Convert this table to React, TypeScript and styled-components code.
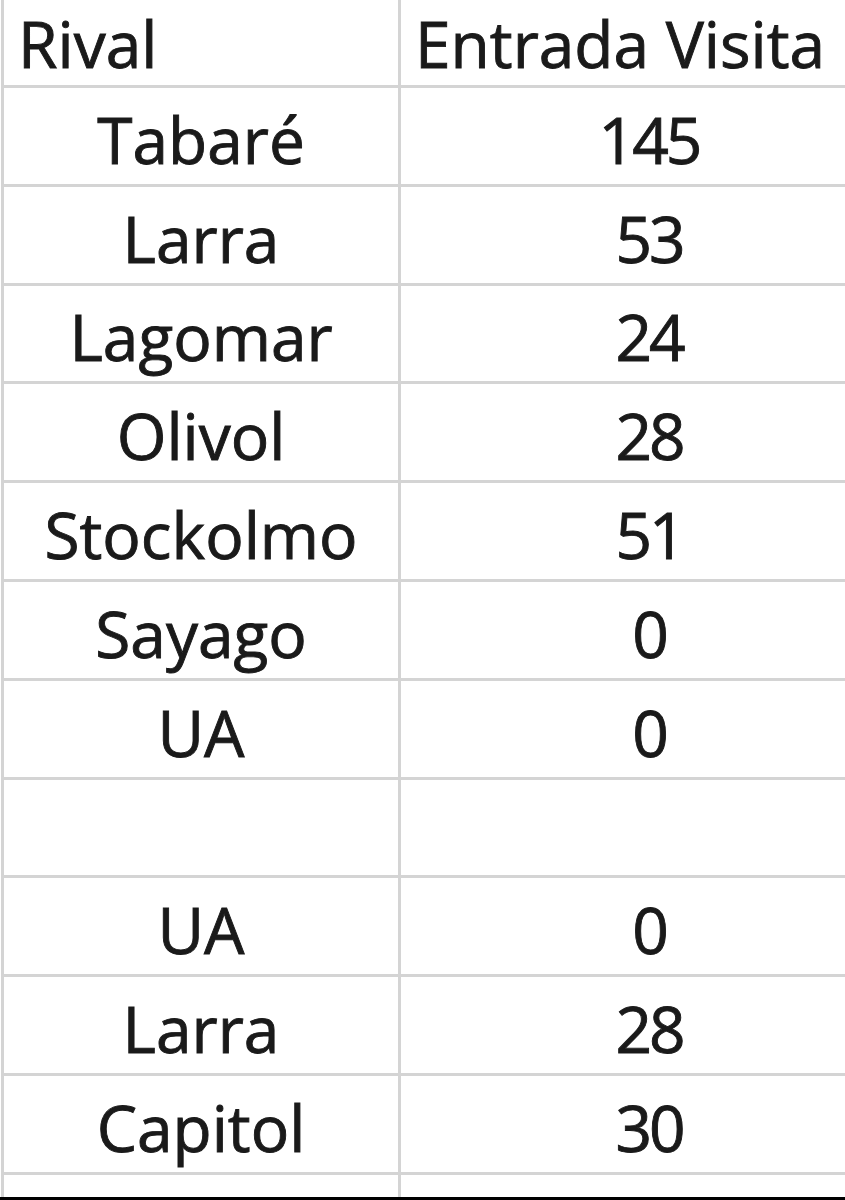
import React from 'react';
import styled, { createGlobalStyle } from 'styled-components';

const GlobalStyle = createGlobalStyle`
  html, body {
    margin: 0;
    padding: 0;
    background: #ffffff;
  }
`;

const Page = styled.div`
  width: 845px;
  height: 1200px;
  overflow: hidden;
  background: #ffffff;
  display: flex;
  flex-direction: column;
`;

const Sheet = styled.div`
  flex: 1;
  overflow: hidden;
  padding-left: 1px;
`;

const Grid = styled.div`
  display: grid;
  grid-template-columns: 397px 496px;
  border-left: 3px solid #d4d4d4;
  width: 893px;
`;

const Cell = styled.div<{ $header?: boolean; $last?: boolean; $num?: boolean }>`
  box-sizing: border-box;
  height: ${(p) => (p.$header ? '88px' : '98.8px')};
  border-bottom: 3px solid #d4d4d4;
  border-right: ${(p) => (p.$last ? 'none' : '3px solid #d4d4d4')};
  display: flex;
  align-items: center;
  justify-content: ${(p) => (p.$header ? 'flex-start' : 'center')};
  padding: ${(p) => (p.$header ? '2px 0 0 14px' : '8px 0 0 0')};
  font-family: 'Open Sans', 'Noto Sans', sans-serif;
  font-size: 64px;
  letter-spacing: ${(p) => (p.$num ? '-3px' : '0')};
  color: #1a1a1a;
  -webkit-text-stroke: 0.9px #1a1a1a;
  white-space: nowrap;
  line-height: 1;
`;

const BottomBar = styled.div`
  height: 3px;
  background: #000000;
`;

const rows: [string, string][] = [
  ['Tabaré', '145'],
  ['Larra', '53'],
  ['Lagomar', '24'],
  ['Olivol', '28'],
  ['Stockolmo', '51'],
  ['Sayago', '0'],
  ['UA', '0'],
  ['', ''],
  ['UA', '0'],
  ['Larra', '28'],
  ['Capitol', '30'],
  ['', ''],
];

export default function App() {
  return (
    <Page>
      <GlobalStyle />
      <Sheet>
        <Grid>
          <Cell $header>Rival</Cell>
          <Cell $header $last>Entrada Visita</Cell>
          {rows.map(([rival, entrada], i) => (
            <React.Fragment key={i}>
              <Cell>{rival}</Cell>
              <Cell $last $num>{entrada}</Cell>
            </React.Fragment>
          ))}
        </Grid>
      </Sheet>
      <BottomBar />
    </Page>
  );
}
